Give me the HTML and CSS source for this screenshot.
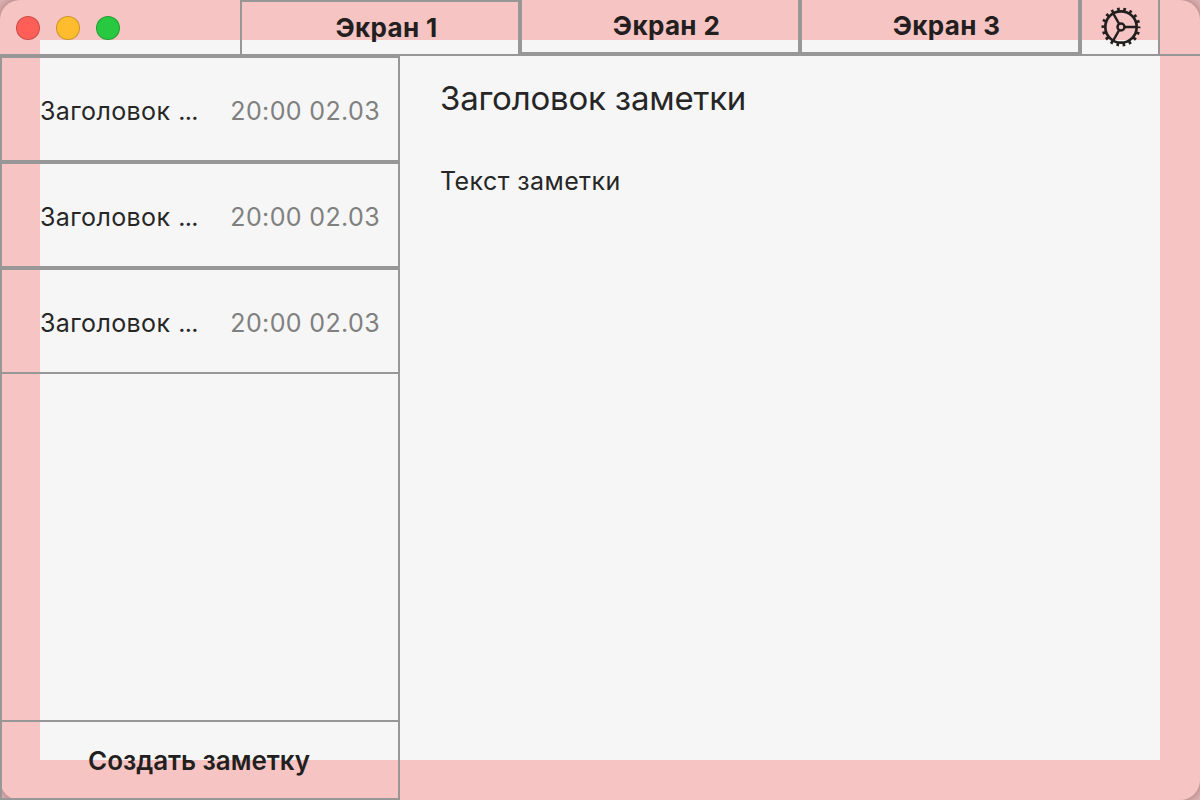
FILE: index.html
```html
<!DOCTYPE html>
<html lang="ru">
<head>
<meta charset="utf-8">
<title>Заметки</title>
<link rel="stylesheet" href="styles.css">
</head>
<body>
<div class="window">
  <header class="titlebar">
    <div class="controls">
      <span class="dot close"></span><span class="dot minimize"></span><span class="dot zoom"></span>
    </div>
    <nav class="tabs">
      <button class="tab active">Экран 1</button>
      <button class="tab">Экран 2</button>
      <button class="tab">Экран 3</button>
    </nav>
    <button class="settings" aria-label="Настройки">
      <svg class="gear" viewBox="-20 -20 40 40" width="40" height="40">
        <circle r="17.7" fill="none" stroke="#231f1f" stroke-width="3.6" stroke-dasharray="2.6 3.578" stroke-dashoffset="1.3"/>
        <circle r="15.7" fill="none" stroke="#231f1f" stroke-width="2.7"/>
        <circle r="3.5" fill="none" stroke="#231f1f" stroke-width="2.5"/>
        <path d="M4 0H15M-2 -3.46L-7.7 -13.3M-2 3.46L-7.7 13.3" stroke="#231f1f" stroke-width="2.4"/>
      </svg>
    </button>
  </header>
  <div class="content">
    <aside class="sidebar">
      <div class="notes">
        <div class="note"><span class="name">Заголовок <span class="dots">...</span></span><time class="date">20:00 02.03</time></div>
        <div class="note"><span class="name">Заголовок <span class="dots">...</span></span><time class="date">20:00 02.03</time></div>
        <div class="note"><span class="name">Заголовок <span class="dots">...</span></span><time class="date">20:00 02.03</time></div>
      </div>
      <button class="create">Создать заметку</button>
    </aside>
    <main class="editor">
      <h1 class="title">Заголовок заметки</h1>
      <p class="text">Текст заметки</p>
    </main>
  </div>
</div>
</body>
</html>
```
FILE: styles.css
```css
* { box-sizing: border-box; }
body {
  margin: 0;
  width: 1200px;
  height: 800px;
  overflow: hidden;
  background: #dfb1b1;
  color: #262626;
  font-family: Inter, "Liberation Sans", sans-serif;
}
button {
  padding: 0;
  border: 0;
  background: none;
  color: inherit;
  font: inherit;
}
.window {
  width: 1200px;
  height: 800px;
  display: flex;
  flex-direction: column;
  border-radius: 20px;
  background: linear-gradient(#f6f6f6, #f6f6f6) 40px 40px / 1120px 720px no-repeat, #f6c4c3;
  box-shadow: 0 0 0 1px #c49a9a, 0 0 9px rgba(70, 20, 20, .4);
}
.titlebar {
  flex: none;
  height: 56px;
  display: flex;
  border-bottom: 2px solid #979797;
}
.controls {
  width: 240px;
  display: flex;
  gap: 16px;
  padding: 16px;
}
.dot {
  width: 24px;
  height: 24px;
  border-radius: 50%;
  border: 1px solid rgba(0, 0, 0, .2);
}
.close { background: #ff5f57; }
.minimize { background: #febc2e; }
.zoom { background: #28c840; }
.tabs { display: flex; }
.tab {
  width: 280px;
  height: 54px;
  padding: 0 0 1px 13px;
  border: 2px solid #979797;
  border-top: 0;
  color: #231f1f;
  font-size: 26px;
  font-weight: 700;
  letter-spacing: .35px;
}
.active {
  padding-bottom: 2px;
  border-top: 2px solid #979797;
  border-bottom: 0;
}
.settings {
  width: 80px;
  height: 54px;
  display: flex;
  justify-content: center;
  align-items: center;
  padding: 0 0 0 2px;
  border: solid #979797;
  border-width: 0 2px;
}
.gear { display: block; }
.content {
  flex: 1;
  display: flex;
}
.sidebar {
  width: 400px;
  display: flex;
  flex-direction: column;
}
.notes {
  flex: 1;
  border: solid #979797;
  border-width: 0 2px;
}
.note {
  height: 106px;
  display: flex;
  justify-content: space-between;
  align-items: center;
  padding: 4px 18px 0 38px;
  border: solid #979797;
  border-width: 2px 0;
  font-size: 25px;
  letter-spacing: .37px;
  white-space: nowrap;
}
.name { word-spacing: .5px; }
.dots { letter-spacing: -.7px; }
.date { color: #808080; }
.create {
  height: 80px;
  border: 2px solid #979797;
  padding: 0 2px 0 0;
  color: #231f1f;
  font-size: 26px;
  font-weight: 600;
  letter-spacing: -.05px;
}
.editor { padding: 21px 40px; }
.title {
  margin: 0;
  font-size: 33px;
  line-height: 42px;
  font-weight: 400;
  letter-spacing: -.21px;
}
.text {
  margin: 46px 0 0;
  font-size: 25px;
  line-height: 32px;
  letter-spacing: .42px;
}
```
